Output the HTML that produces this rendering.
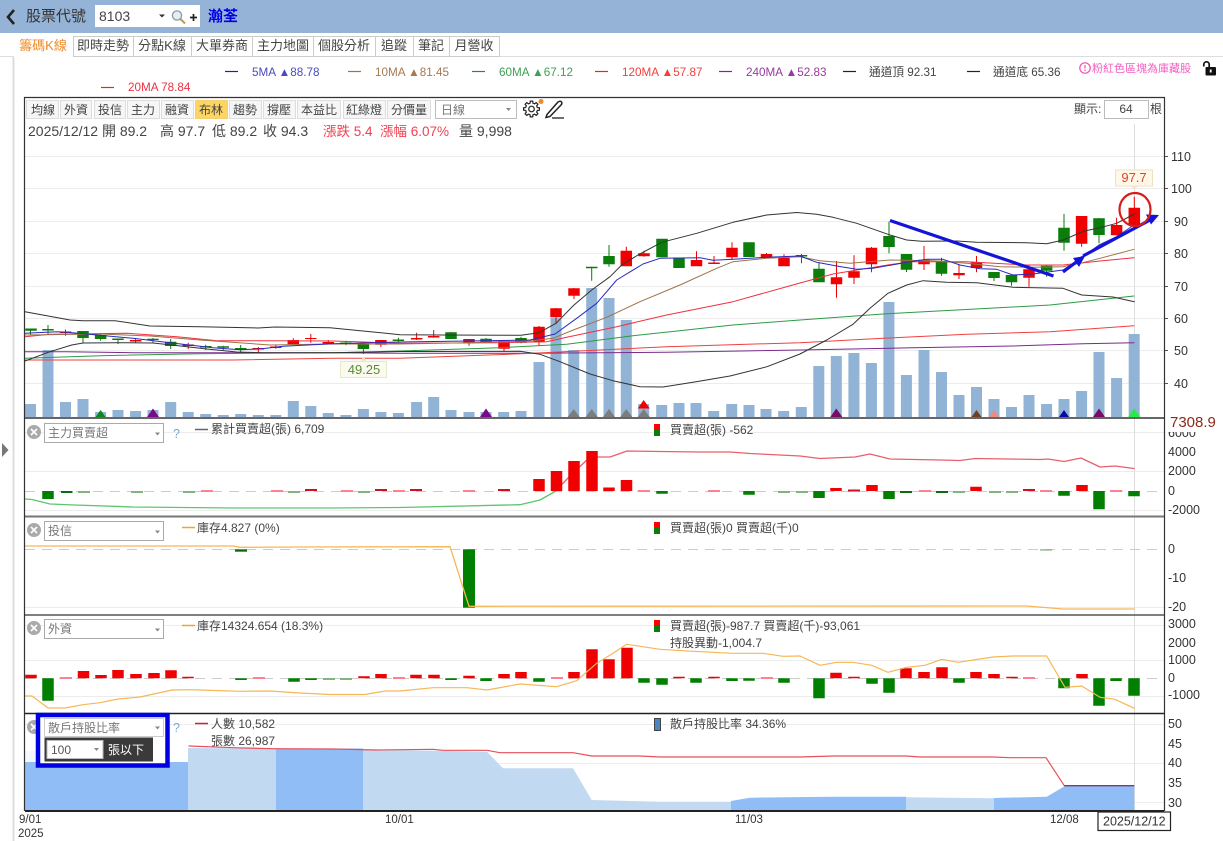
<!DOCTYPE html>
<html lang="zh-Hant">
<head>
<meta charset="utf-8">
<title>籌碼K線 8103 瀚荃</title>
<style>
html,body{margin:0;padding:0;background:#fff;width:1223px;height:841px;overflow:hidden}
svg{display:block;font-family:"Liberation Sans","Noto Sans CJK TC",sans-serif;font-size:12px;fill:#444}
.t{font-size:12px;fill:#444;text-anchor:middle}
.tb{font-size:13px;fill:#444;text-anchor:middle}
.ax{font-size:12.5px;fill:#333}
.leg{font-size:12px;fill:#444}
.sel{font-size:12px;fill:#777}
.g{stroke:#ececec;stroke-width:1;fill:none}
.z{stroke:#ccc;stroke-width:1;stroke-dasharray:10 7;fill:none}
.l{fill:none;stroke-linejoin:round;stroke-linecap:round}
.b{fill:none;stroke-width:11.5}
</style>
</head>
<body>
<svg width="1223" height="841" viewBox="0 0 1223 841" xmlns="http://www.w3.org/2000/svg">
<!-- header -->
<rect x="0" y="0" width="1223" height="33" fill="#95b3d7"/>
<path d="M14 10L8 17L14 24" fill="none" stroke="#222" stroke-width="2.6"/>
<text x="26" y="21" style="font-size:15px;fill:#333">股票代號</text>
<rect x="95" y="5" width="105" height="22" fill="#fff"/>
<text x="99" y="21" style="font-size:14px;fill:#444">8103</text>
<path d="M159 14.500h6l-3 3z" fill="#333"/>
<circle cx="177" cy="15.500" r="4.600" fill="#e4eef4" stroke="#8c9aa4" stroke-width="1.300"/>
<path d="M180.500 19L185 23.500" stroke="#c09a50" stroke-width="2"/>
<path d="M190 17.500h7M193.500 14v7" stroke="#222" stroke-width="1.700"/>
<text x="208" y="21" style="font-size:15px;fill:#0000e6;font-weight:bold">瀚荃</text>

<!-- tabs -->
<path d="M0 56.500H1223" stroke="#ddd"/>
<path d="M13.500 56V841" stroke="#ddd" stroke-width="2"/>
<g fill="#fff" stroke="#ccc">
<rect x="73.500" y="36.500" width="60" height="20"/><rect x="133.500" y="36.500" width="58" height="20"/><rect x="191.500" y="36.500" width="61" height="20"/><rect x="252.500" y="36.500" width="61" height="20"/><rect x="313.500" y="36.500" width="62" height="20"/><rect x="375.500" y="36.500" width="38" height="20"/><rect x="413.500" y="36.500" width="36" height="20"/><rect x="449.500" y="36.500" width="50" height="20"/>
</g>
<rect x="14" y="35" width="59" height="23" fill="#fff"/>
<text class="tb" x="43" y="50" style="fill:#f08a24">籌碼K線</text>
<text class="tb" x="103" y="50">即時走勢</text><text class="tb" x="162" y="50">分點K線</text><text class="tb" x="222" y="50">大單券商</text><text class="tb" x="283" y="50">主力地圖</text><text class="tb" x="344" y="50">個股分析</text><text class="tb" x="394" y="50">追蹤</text><text class="tb" x="431" y="50">筆記</text><text class="tb" x="474" y="50">月營收</text>

<!-- legend -->
<g stroke-width="1.200" fill="none">
<path d="M225 71.500h13" stroke="#2020a0"/><path d="M348 71.500h13" stroke="#a0724a"/><path d="M472 71.500h13" stroke="#2a8a3a"/><path d="M595 71.500h13" stroke="#e22"/><path d="M719 71.500h13" stroke="#7a2a8a"/><path d="M843 71.500h13" stroke="#222"/><path d="M967 71.500h13" stroke="#222"/><path d="M101 87.500h13" stroke="#e22"/>
</g>
<text x="252" y="76" style="font-size:11.700px;fill:#4a4ac0">5MA ▲88.78</text>
<text x="375" y="76" style="font-size:11.700px;fill:#a87850">10MA ▲81.45</text>
<text x="499" y="76" style="font-size:11.700px;fill:#3f9f55">60MA ▲67.12</text>
<text x="622" y="76" style="font-size:11.700px;fill:#f24040">120MA ▲57.87</text>
<text x="746" y="76" style="font-size:11.700px;fill:#953b9b">240MA ▲52.83</text>
<text x="869" y="76" style="font-size:11.700px;fill:#444">通道頂 92.31</text>
<text x="993" y="76" style="font-size:11.700px;fill:#444">通道底 65.36</text>
<text x="128" y="91" style="font-size:11.700px;fill:#f03040">20MA 78.84</text>
<circle cx="1085" cy="68" r="5.200" fill="none" stroke="#f050b0" stroke-width="1.200"/>
<path d="M1085 65v3.500M1085 69.600v1.400" stroke="#f050b0" stroke-width="1.200"/>
<text x="1092" y="72" style="font-size:11px;fill:#f45cc0">粉紅色區塊為庫藏股</text>
<rect x="1205.500" y="67" width="10.500" height="8.500" rx="1" fill="#111"/>
<path d="M1203.800 66.500V64.500A2.700 2.700 0 0 1 1209.200 64.500V67.500" fill="none" stroke="#111" stroke-width="1.700"/>
<rect x="1209.800" y="69.500" width="1.800" height="3" fill="#fff"/>

<!-- chart frame bg & grid -->
<g class="g">
<path d="M25 156.500H1164M25 188.500H1164M25 221.500H1164M25 253.500H1164M25 286.500H1164M25 318.500H1164M25 350.500H1164M25 383.500H1164"/>
<path d="M25 432.500H1164M25 471.500H1164M25 510.500H1164"/>
<path d="M25 607.500H1164"/>
<path d="M25 625.500H1164M25 660.500H1164M25 696.500H1164"/>
<path d="M25 724.500H1164M25 763.500H1164M25 802.500H1164"/>
</g>
<path d="M1134.500 124V811" stroke="#ddd" fill="none"/>

<!-- volume -->
<path class="b" stroke="#90b3d6" style="stroke-width:11" d="M30.500 404V417M48 350V417M65.500 402V417M83 399V417M100.600 412V417M118 410V417M135.600 411V417M153 410V417M170.700 402V417M188.200 412V417M205.700 414V417M223.200 415V417M240.700 414V417M258.300 415V417M275.800 415V417M293.300 401V417M310.800 406V417M328.300 413V417M345.900 415V417M363.400 409V417M380.900 412V417M398.400 413V417M416.600 402V417M433.700 397V417M451 410V417M469 412V417M486 412V417M503.700 412V417M521 411V417M539 362V417M556 318V417M573.700 350V417M591.700 288V417M609 298V417M626.300 320V417M643.700 404V417M661.700 405V417M679 403V417M696 403V417M713.700 411V417M731.700 404V417M749 405V417M766 409V417M783.700 411V417M801.300 407V417M818.800 366V417M836.300 356V417M853.900 353V417M871.400 363V417M888.900 302V417M906.400 375V417M924 350V417M941.500 372V417M959 395V417M976.500 387V417M994 399V417M1011.500 407V417M1029 395V417M1046.600 404V417M1064 399V417M1081.600 391V417M1099 352V417M1116.600 378V417M1134.200 334V417"/>
<!-- triangles -->
<path d="M100.600 410l5 7h-10z" fill="#0a8a1a"/>
<path d="M153 408.500l6 8.500h-12z" fill="#7a0a8a"/>
<path d="M486 408.500l6 8.500h-12z" fill="#7a0a8a"/>
<path d="M573.700 409l6 8h-12zM591.700 409l6 8h-12zM609 409l6 8h-12zM626.300 409l6 8h-12zM643.700 409l6 8h-12z" fill="#7d7d7d"/>
<path d="M643.700 400l6 8.500h-12z" fill="#f00000"/>
<path d="M836.300 408.500l6 8.500h-12z" fill="#7a0a6a"/>
<path d="M976.500 410l5 7h-10z" fill="#704020"/>
<path d="M994 410l5 7h-10z" fill="#f08a80"/>
<path d="M1064 410l5 7h-10z" fill="#0a0aa0"/>
<path d="M1099 408.500l6 8.500h-12z" fill="#7a0a6a"/>
<path d="M1134.200 408.500l6 8.500h-12z" fill="#22ee44"/>

<!-- candles green -->
<path stroke="#0a7d0a" fill="none" d="M30.500 330V335M48 325V334M83 331V342.700M100.600 333V340.600M118 339V344M153 338V343M170.700 339V349M205.700 344.700V350M223.200 345.700V350M240.700 345V352M346 340.700V345.300M363.400 344V354M398.400 337.700V342.700M451 332V339M486 338V343M521 336.700V343.300M591.700 266.700V280.700M609 245V266.700M801.500 254V263.300M819 262.700V282M889 221.700V253.300M906.500 254V272M941.500 257.700V275.700M994 272V281M1011.500 275V285.700M1046.600 265V276.700M1064 214V250.700M1099 218V243.300"/>
<path class="b" stroke="#0a7d0a" d="M31 328.500V330.700M48 329V330.500M83 331V338M100.600 335V339M118 338.500V340M153 338.700V340M170.700 341.700V346M205.700 346V347.500M223.200 346.300V347.800M240.700 348V350M346 342.500V344M363.400 344V349M398.400 339.500V341M451 332.300V339M486 338.700V343M521 338V342.700M591.700 266.700V268.200M609 256V264.300M662 238.700V257.300M679 257.700V268M749 242.300V257M801.500 255V256.500M819 268.700V282.300M889 236V247M906.500 254V269.700M941.500 260.700V273.700M994 272V278M1011.500 275V282.300M1046.600 265.700V270.700M1064 227.700V242.700M1099 218.300V235"/>
<!-- candles red -->
<path stroke="#f00000" fill="none" d="M65.500 329.500V335.700M135.600 338V343M188.200 342.700V349M258.300 347V352.700M275.800 345.300V348.700M293.300 338.300V344M310.800 334V342.700M328.300 340V344.300M380.900 340V347M416.600 332.700V340M433.700 330V337.700M469 339V345.700M504 340V351M539 326V345.700M556 308V324M574 288V299M626.300 246.700V266M644 250.700V256.700M696.500 251.300V266M714 256V264M732 242.300V260M766.500 253V258M784 254.300V266M836.500 261V297.700M854 255.300V284M871.500 247V272.300M924 246V270M959 264.300V279M976.500 256V272.300M1029 265V286.700M1081.600 216V246.700M1116.600 217.700V235.300M1134.300 196.700V225"/>
<path class="b" stroke="#f00000" d="M65.500 331.500V333M135.600 340V341.500M188.200 344.500V346M258.300 348V349.500M275.800 346.500V348M293.300 340V344.300M310.800 338V339M328.300 342V343.500M380.900 340V344.700M416.600 338V339.500M433.700 336V337.500M469 339V343.300M504 340.700V348.700M539 326.700V342.300M556 308.300V317.300M574 288.300V295.700M626.300 250.700V266.300M644 253.300V256.300M696.500 260V266.300M714 262.500V264M732 247.700V257.300M766.500 254V258M784 257.700V266.300M836.500 277.300V284.300M854 271.300V277.700M871.500 247.700V264.300M924 259.700V264.300M959 273V275.300M976.500 262.300V268M1029 269.300V277.700M1081.600 216V243.700M1116.600 225V235.300M1134.300 207.700V225"/>

<!-- MA lines -->
<g class="l" stroke-width="1">
<polyline stroke="#7a2a8a" points="25,351.700 67,351.700 133,352.700 333,352.700 400,353.300 533,353.300 666.700,352.300 800,350 900,348 1013,346 1083,343.700 1134,342.700"/>
<polyline stroke="#f04040" points="25,360 233,360 333,358.300 400,358.300 533,353.300 666.700,346.700 800,342.700 883,338.300 966.700,334.300 1050,331.700 1134,325.700"/>
<polyline stroke="#2f9a45" points="25,358.300 100,355.700 200,353.700 333,352.700 400,351 500,347.700 566.700,344.300 633,335.700 733,325 800,320 883,314 956.700,310 1050,305 1134,296"/>
<polyline stroke="#f03040" points="25,336.700 50,334.300 127,333.300 177,336.700 217,340.700 263,340.700 333,341 400,343.300 500,342.700 546.700,341.700 566.700,337.300 616.700,326.700 666.700,315 733,301.700 800,283 833,274 883,265.700 910,261.700 966.700,261.700 1026.700,265 1063,265 1100,261 1134,257.700"/>
<polyline stroke="#a0724a" points="25,335 100,334 150,336 200,340 270,345 330,344 400,344 466.700,342.700 533,340.700 553,338.300 573.300,330 606.700,317.300 640,301.700 680,285 716.700,268.300 733,261.700 766.700,258.300 800,256.700 820,260.700 850,263.300 890,260 933,260.700 966.700,263.300 1000,266.700 1033,267.300 1063,266.700 1080,263.300 1100,258.300 1134,249.300"/>
<polyline stroke="#2a2ac0" points="25,333.300 57,331.700 67,332.300 97,335 133,338.300 170,342.700 213,347.700 240,349.700 260,349 283,346.300 333,343.700 400,342 530,340 555,334 576.700,318.300 596.700,303.300 616.700,280 643,264 660,258.300 700,257.700 713,260.300 733,259.300 766.700,257.300 800,256 816.700,262.300 836.700,266 856.700,269.300 873,268.300 910,261.700 926.700,259.300 943,259.300 960,265 980,268.700 996.700,269.300 1013,275 1033,274 1063,270 1081,258 1099,245 1116,237 1134,225"/>
<polyline stroke="#333" points="25,311.700 70,320 83,320.700 115,320.700 150,326 200,326.700 258,328 275,327 330,327.700 400,334.700 440,335 521,335.300 539,332.700 556,323.300 574,305 591.700,290 610,276.700 621.700,265 638,255 661.700,242.300 696.700,233.300 733,222.300 766.700,215 796.700,212.500 816.700,214.300 833,217.300 856.700,223.300 888,234.300 906.700,240 921.700,241.300 956.700,241 976.700,242.300 1026.700,242.700 1046.700,243.700 1063.300,240 1083.300,231.300 1100,227.700 1116.700,223.300 1134.300,214"/>
<polyline stroke="#333" points="25,361 50,351.700 71.700,345 83,343 115,342.700 153,343 171.700,345 206.700,349 236.700,352 263,352.700 333,352.700 400,351.500 520,351.300 540,354.300 560,361.700 590,374 613,380.700 640,386.700 663,387 693,382.300 730,376 767,366.700 800,354 826.700,340 853,324.300 870,308.300 888,293.300 906.700,285 923,280.700 946.700,282.300 976.700,282.700 1013,287.300 1063,288.300 1081.700,295 1113,297 1134.300,301.700"/>
</g>

<!-- annotations -->
<path d="M890 220.500L1053.500 276" stroke="#1414d8" stroke-width="3.200" fill="none"/>
<path d="M1063 272L1083 257" stroke="#1414d8" stroke-width="3.200" fill="none"/>
<path d="M1073 258l12-2-6 11z" fill="#1414d8"/>
<path d="M1083 256L1150 220" stroke="#1414d8" stroke-width="3.200" fill="none"/>
<path d="M1159 215l-13-0.500 5 10z" fill="#1414d8"/>
<ellipse cx="1135" cy="209.500" rx="15.500" ry="16.500" fill="none" stroke="#d81c1c" stroke-width="2.200"/>
<rect x="1115.500" y="170" width="37" height="16" fill="#fff8e8" stroke="#eee2c0"/>
<path d="M1131 186h7l-3.500 4z" fill="#f4e8c8"/>
<text x="1134" y="182" style="font-size:13px;fill:#e04030;text-anchor:middle">97.7</text>
<rect x="340.500" y="361.500" width="46" height="16" fill="#fafaee" stroke="#e8e8c8"/>
<path d="M360 361.500h7l-3.500-5z" fill="#f0ecc8"/>
<text x="364" y="374" style="font-size:13px;fill:#5a8a3a;text-anchor:middle">49.25</text>

<!-- panel 1 -->
<path class="z" d="M25 491.500H1164"/>
<path class="l" stroke="#5fc46f" stroke-width="1.300" d="M25 499L32 499.500L50 504L75 505L133 507L233 508L333 508L400 507.500L520 504.700L540 500L555 491.500"/>
<path class="l" stroke="#e8606c" stroke-width="1.300" d="M555 491.500L570 476L590 457L610 457L627 451L660 451.500L700 452L730 452L750 453.500L800 456L820 458.500L855 457L870 454L890 459L940 460L960 460.500L975 458.500L1040 459.500L1048 459L1064 461.500L1081 458L1100 467L1115 466L1134 468.500"/>
<path class="b" stroke="#007f00" d="M48 491V499M819 491V498M889 491V499M662 491V493.700M749 491V494.700M1064 491V495.700M1099 491V509.300M1134 491V496.300"/>
<path class="b" stroke="#f00000" d="M539 479V491M556.500 471V491M574 461V491M592 451V491M609 487.500V491M626.500 480V491M836 488V491M872 485V491M976 486.700V491M1082 485V491"/>
<g fill="#0d6d0d"><rect x="61" y="491" width="11.500" height="2"/><rect x="900" y="491" width="12" height="2"/><rect x="936" y="491" width="12" height="2"/></g>
<g fill="#80b480"><rect x="78" y="491" width="12" height="2"/><rect x="131" y="491" width="12" height="2"/><rect x="183" y="491" width="12" height="2"/><rect x="288" y="491" width="12" height="2"/><rect x="358" y="491" width="12" height="2"/><rect x="778" y="491" width="12" height="2"/><rect x="796" y="491" width="12" height="2"/><rect x="953" y="491" width="12" height="2"/><rect x="989" y="491" width="12" height="2"/><rect x="1006" y="491" width="12" height="2"/></g>
<g fill="#ff8090"><rect x="201" y="490" width="12" height="2"/><rect x="271" y="490" width="12" height="2"/><rect x="341" y="490" width="12" height="2"/><rect x="393" y="490" width="12" height="2"/><rect x="463" y="490" width="12" height="2"/><rect x="638" y="490" width="12" height="2"/><rect x="708" y="490" width="12" height="2"/><rect x="919" y="490" width="12" height="2"/><rect x="1040" y="490" width="12" height="2"/><rect x="1110" y="490" width="12" height="2"/></g>
<g fill="#d01020"><rect x="305" y="489" width="12" height="2"/><rect x="375" y="489" width="12" height="2"/><rect x="410" y="489" width="12" height="2"/><rect x="498" y="489" width="12" height="2"/><rect x="848" y="489.500" width="12" height="2"/><rect x="1023" y="489" width="12" height="2"/></g>

<!-- panel 2 -->
<path class="z" d="M25 549.500H1164"/>
<rect x="463" y="549.300" width="12" height="58.400" fill="#007f00"/>
<rect x="235" y="549.300" width="12" height="2.400" fill="#0d6d0d"/>
<rect x="1040" y="549.300" width="12" height="1.300" fill="#80b480"/>
<path class="l" stroke="#f6b756" stroke-width="1.300" d="M25 546H233L240 547.300L300 547L450 546.700L469 606.300L1026.700 606L1063 609L1134 609"/>

<!-- panel 3 -->
<path class="z" d="M25 678.500H1164"/>
<path class="b" stroke="#f00000" d="M31 674.700V678.300M83.500 671V678.300M101 675V678.300M118 670V678.300M136 674V678.300M154 673V678.300M171 670.300V678.300M188 676.700V678.300M364 676.300V678.300M381 674V678.300M416 674.700V678.300M434 674.700V678.300M469 675.700V678.300M504 674V678.300M521 672V678.300M574 672V678.300M592 649.300V678.300M609 659.300V678.300M627 647.700V678.300M679 676.700V678.300M714 676.700V678.300M836 672.700V678.300M854 676.700V678.300M906 668.300V678.300M924 672V678.300M942 667.300V678.300M976 672V678.300M994 674V678.300M1012 676.700V678.300M1082 674V678.300"/>
<path class="b" stroke="#007f00" d="M48 678.300V700.700M241 678.300V680M294 678.300V681.700M311 678.300V680M451 678.300V680M486 678.300V681M539 678.300V681.700M644 678.300V682.700M662 678.300V684.700M696 678.300V682.700M732 678.300V681M749 678.300V680.700M784 678.300V682.700M819 678.300V698.300M872 678.300V683.700M889 678.300V692.700M959 678.300V682.700M1064 678.300V688.300M1099 678.300V705.700M1116 678.300V681M1134 678.300V695.700"/>
<g fill="#ff8090"><rect x="60" y="677" width="12" height="2"/><rect x="253" y="677" width="12" height="2"/><rect x="393" y="677" width="12" height="2"/><rect x="551" y="677" width="12" height="2"/><rect x="761" y="677" width="12" height="2"/><rect x="1023" y="677" width="12" height="2"/></g>
<g fill="#80b480"><rect x="323" y="678" width="12" height="2"/><rect x="340" y="678" width="12" height="2"/></g>
<path class="l" stroke="#f6b756" stroke-width="1.200" d="M25 696L32 696L48 708L65 708L83 704.700L100 702.700L118 699L140 697L172 690L190 689.700L200 690L240 691.300L270 691L300 693L330 694.500L365 694.500L385 691L400 691L433 687.700L467 687.700L487 690L520 684L556.700 686.700L576.700 680.700L596.700 663.300L613 653.300L626.700 644.300L660 649.300L693 651.300L733 653.300L763 653.300L783 656.300L800 656L820 665.300L836.700 662.300L853 662.300L871.700 665.300L888 672.300L906.700 667.300L925 665.300L941.700 659.300L958 662.300L993 657L1013 656L1046.700 656L1065 687.300L1081.700 686L1100 697.300L1115 699.300L1134.300 708.300"/>

<!-- panel 4 -->
<rect x="25" y="751" width="11" height="11" fill="#f4f8fd"/>
<path fill="#90bdf6" d="M25 762H188V810H25Z"/>
<path fill="#c2d9f2" d="M188 748L276 748.500V810H188Z"/>
<path fill="#90bdf6" d="M276 748.500L363 748.500V810H276Z"/>
<path fill="#c2d9f2" d="M363 749.500L400 750L487 751.700L503 768.300L573 768.300L591.700 800L660 801.700L731 801.700V810H363Z"/>
<path fill="#90bdf6" d="M731 801L750 797.700L833 796.700L906 796.700V810H731Z"/>
<path fill="#c2d9f2" d="M906 797.300L994 798.300V810H906Z"/>
<path fill="#90bdf6" d="M994 798L1046.700 796.700L1065 786L1134.300 786V810H994Z"/>
<path class="l" stroke="#e8505a" stroke-width="1.200" d="M189 746L233 747.700L273 748.700L333 749L377 750L433 749.300L443 750.300L487 750.300L500 752.700L573 752.700L591.700 756L640 756L660 757L800 757L833 756L906 756L920 757L993 757L1010 757.700L1046 757.700L1064.300 785.700"/>
<path stroke="#7a3a7a" stroke-width="1.400" fill="none" d="M1064.300 785.700H1134.300"/>

<!-- separators & frame -->
<path d="M25 418H1164" stroke="#333" stroke-width="1.500"/>
<path d="M25 516.500H1164" stroke="#777" stroke-width="2"/>
<path d="M25 615H1164" stroke="#555" stroke-width="1.500"/>
<path d="M25 713.500H1164" stroke="#222" stroke-width="1.500"/>
<path d="M25 811H1164" stroke="#222" stroke-width="2"/>
<path d="M24.500 811V97.500H1164.500V811" fill="none" stroke="#333" stroke-width="1.200"/>

<!-- axis ticks + labels -->
<path d="M1165 156.500h3M1165 188.500h3M1165 221.500h3M1165 253.500h3M1165 286.500h3M1165 318.500h3M1165 350.500h3M1165 383.500h3" stroke="#555"/>
<text class="ax" x="1171" y="161">110</text><text class="ax" x="1171" y="193">100</text><text class="ax" x="1174" y="226">90</text><text class="ax" x="1174" y="258">80</text><text class="ax" x="1174" y="291">70</text><text class="ax" x="1174" y="323">60</text><text class="ax" x="1174" y="355">50</text><text class="ax" x="1174" y="388">40</text>
<text class="ax" x="1168" y="437">6000</text>
<rect x="1166" y="414" width="52" height="18" fill="#fff"/>
<text x="1170" y="427" style="font-size:15px;fill:#8b2a1a">7308.9</text>
<text class="ax" x="1168" y="456">4000</text><text class="ax" x="1168" y="475">2000</text><text class="ax" x="1168" y="495">0</text><text class="ax" x="1168" y="514">-2000</text>
<text class="ax" x="1168" y="553">0</text><text class="ax" x="1168" y="582">-10</text><text class="ax" x="1168" y="611">-20</text>
<text class="ax" x="1168" y="628">3000</text><text class="ax" x="1168" y="647">2000</text><text class="ax" x="1168" y="664">1000</text><text class="ax" x="1168" y="682">0</text><text class="ax" x="1168" y="699">-1000</text>
<text class="ax" x="1168" y="728">50</text><text class="ax" x="1168" y="748">45</text><text class="ax" x="1168" y="767">40</text><text class="ax" x="1168" y="787">35</text><text class="ax" x="1168" y="807">30</text>
<text x="19" y="823" style="font-size:11.500px;fill:#333">9/01</text>
<text x="18" y="837" style="font-size:11.500px;fill:#333">2025</text>
<text x="385" y="823" style="font-size:11.500px;fill:#333">10/01</text>
<text x="735" y="823" style="font-size:11.500px;fill:#333">11/03</text>
<text x="1050" y="823" style="font-size:11.500px;fill:#333">12/08</text>
<rect x="1098" y="812" width="72.500" height="18.500" fill="#fff" stroke="#222" stroke-width="1.200"/>
<text x="1103" y="825.500" style="font-size:12.500px;fill:#333">2025/12/12</text>

<!-- toolbar -->
<g fill="#f6f6f6" stroke="#ddd">
<rect x="26.500" y="100.500" width="32" height="18"/><rect x="60.500" y="100.500" width="31" height="18"/><rect x="94.500" y="100.500" width="31" height="18"/><rect x="127.500" y="100.500" width="32" height="18"/><rect x="161.500" y="100.500" width="32" height="18"/><rect x="195.500" y="100.500" width="32" height="18" style="fill:#fdd565;stroke:#f3cf70"/><rect x="229.500" y="100.500" width="32" height="18"/><rect x="263.500" y="100.500" width="32" height="18"/><rect x="297.500" y="100.500" width="43" height="18"/><rect x="343.500" y="100.500" width="42" height="18"/><rect x="387.500" y="100.500" width="43" height="18"/>
</g>
<text class="t" x="43" y="114">均線</text><text class="t" x="76" y="114">外資</text><text class="t" x="110" y="114">投信</text><text class="t" x="143" y="114">主力</text><text class="t" x="177" y="114">融資</text><text class="t" x="211" y="114">布林</text><text class="t" x="245" y="114">趨勢</text><text class="t" x="279" y="114">撐壓</text><text class="t" x="319" y="114">本益比</text><text class="t" x="364" y="114">紅綠燈</text><text class="t" x="409" y="114">分價量</text>
<rect x="435.500" y="100.500" width="81" height="18" fill="#fff" stroke="#bbb"/>
<text x="441" y="114" class="sel">日線</text>
<path d="M506 108h5l-2.500 3z" fill="#888"/>
<g transform="translate(531.500 109)">
<polygon fill="none" stroke="#222" stroke-width="1.200" stroke-linejoin="round" points="5.820,-1.450 7.900,-1.250 7.900,1.250 5.820,1.450 5.140,3.090 6.470,4.700 4.700,6.470 3.090,5.140 1.450,5.820 1.250,7.900 -1.250,7.900 -1.450,5.820 -3.090,5.140 -4.700,6.470 -6.470,4.700 -5.140,3.090 -5.820,1.450 -7.900,1.250 -7.900,-1.250 -5.820,-1.450 -5.140,-3.090 -6.470,-4.700 -4.700,-6.470 -3.090,-5.140 -1.450,-5.820 -1.250,-7.900 1.250,-7.900 1.450,-5.820 3.090,-5.140 4.700,-6.470 6.470,-4.700 5.140,-3.090"/>
<circle cx="0" cy="0" r="2.800" fill="none" stroke="#222" stroke-width="1.200"/>
</g>
<circle cx="541" cy="101.500" r="2.500" fill="#f08a30"/>
<path d="M547 114.500L558 102Q560.500 100.500 561.500 102Q562.500 103.500 561 105L550 116.500L546 117.500Z" fill="none" stroke="#222" stroke-width="1.500"/>
<path d="M552 118H564" stroke="#222" stroke-width="1.300"/>
<text x="1074" y="113" style="fill:#444">顯示:</text>
<rect x="1104.500" y="100.500" width="44" height="18" fill="#fff" stroke="#bbb"/>
<text x="1126" y="113" style="fill:#444;text-anchor:middle">64</text>
<text x="1150" y="113" style="fill:#444">根</text>

<!-- info -->
<text x="28" y="136" style="font-size:14px;fill:#444">2025/12/12 開 89.2</text>
<text x="160" y="136" style="font-size:14px;fill:#444">高 97.7</text>
<text x="212" y="136" style="font-size:14px;fill:#444">低 89.2</text>
<text x="263" y="136" style="font-size:14px;fill:#444">收 94.3</text>
<text x="323" y="136" style="font-size:13.500px;fill:#f24050">漲跌 5.4</text>
<text x="380" y="136" style="font-size:13.500px;fill:#f24050">漲幅 6.07%</text>
<text x="459" y="136" style="font-size:14px;fill:#444">量 9,998</text>

<!-- left collapse arrow -->
<path d="M2 443L8.500 450L2 457Z" fill="#777"/>

<!-- panel controls -->
<g fill="#aaa"><circle cx="34" cy="432" r="7"/><circle cx="34" cy="530" r="7"/><circle cx="34" cy="628" r="7"/><circle cx="34" cy="727" r="7"/></g>
<path d="M31 429l6 6M37 429l-6 6M31 527l6 6M37 527l-6 6M31 625l6 6M37 625l-6 6M31 724l6 6M37 724l-6 6" stroke="#fff" stroke-width="1.600"/>
<g fill="#fff" stroke="#aaa">
<rect x="44.500" y="423.500" width="119" height="19"/><rect x="44.500" y="521.500" width="119" height="19"/><rect x="44.500" y="619.500" width="119" height="19"/>
</g>
<text class="sel" x="48" y="437">主力買賣超</text>
<text class="sel" x="48" y="535">投信</text>
<text class="sel" x="48" y="633">外資</text>
<path d="M155 432.500h5l-2.500 3zM155 530.500h5l-2.500 3zM155 628.500h5l-2.500 3z" fill="#888"/>
<text x="173" y="438" style="font-size:12.500px;fill:#7aa8d8">?</text>
<!-- blue box -->
<rect x="38" y="715" width="129.500" height="50.500" fill="#fff" stroke="#0000e0" stroke-width="4.500"/>
<rect x="44.500" y="718.500" width="119" height="18" fill="#fff" stroke="#ccc"/>
<text class="sel" x="48" y="732">散戶持股比率</text>
<path d="M155 726.500h5l-2.500 3z" fill="#888"/>
<rect x="44.500" y="737.500" width="108.500" height="24" fill="#3a3a3a"/>
<rect x="47" y="740.500" width="56" height="18" fill="#fff" stroke="#bbb"/>
<text x="51" y="754" style="fill:#555">100</text>
<path d="M94 748h5l-2.500 3z" fill="#888"/>
<text x="108" y="754" style="fill:#fff">張以下</text>
<text x="173" y="732" style="font-size:12.500px;fill:#7aa8d8">?</text>

<!-- panel legends -->
<path d="M195 429.500h13" stroke="#666" stroke-width="1.500"/>
<text class="leg" x="211" y="433">累計買賣超(張) 6,709</text>
<path d="M182 527.500h13" stroke="#f5a030" stroke-width="1.500"/>
<text class="leg" x="197" y="532">庫存4.827 (0%)</text>
<path d="M182 625.500h13" stroke="#f5a030" stroke-width="1.500"/>
<text class="leg" x="197" y="630">庫存14324.654 (18.3%)</text>
<path d="M195 723.500h13" stroke="#d22030" stroke-width="1.500"/>
<text class="leg" x="211" y="728">人數 10,582</text>
<text class="leg" x="211" y="745">張數 26,987</text>
<g>
<rect x="654" y="424" width="6" height="6" fill="#f00"/><rect x="654" y="430" width="6" height="6" fill="#0a7d0a"/>
<rect x="654" y="522" width="6" height="6" fill="#f00"/><rect x="654" y="528" width="6" height="6" fill="#0a7d0a"/>
<rect x="654" y="620" width="6" height="6" fill="#f00"/><rect x="654" y="626" width="6" height="6" fill="#0a7d0a"/>
<rect x="654.500" y="718.500" width="6" height="12" fill="#4a86c0" stroke="#444"/>
</g>
<text class="leg" x="670" y="434">買賣超(張) -562</text>
<text class="leg" x="670" y="532">買賣超(張)0 買賣超(千)0</text>
<text class="leg" x="670" y="630">買賣超(張)-987.7 買賣超(千)-93,061</text>
<text class="leg" x="670" y="647">持股異動-1,004.7</text>
<text class="leg" x="670" y="728">散戶持股比率 34.36%</text>
</svg>
</body>
</html>
